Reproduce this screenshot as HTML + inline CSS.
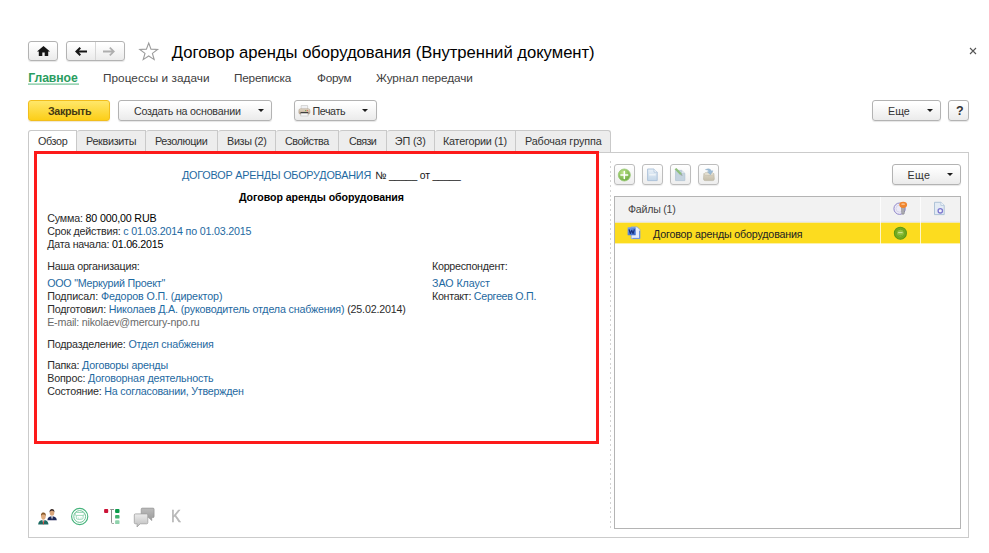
<!DOCTYPE html>
<html lang="ru">
<head>
<meta charset="utf-8">
<title>Договор аренды оборудования (Внутренний документ)</title>
<style>
html,body{margin:0;padding:0;background:#fff;}
body{width:989px;height:553px;position:relative;overflow:hidden;font-family:"Liberation Sans",Arial,sans-serif;font-size:11px;color:#2b2b2b;}
.abs{position:absolute;}
.tx{position:absolute;white-space:nowrap;color:#2b2b2b;}
.lnk{color:#1e69a1;}
.blk{color:#000;}
.btn{position:absolute;box-sizing:border-box;border:1px solid #b3b3b3;border-radius:3px;background:linear-gradient(#ffffff 10%,#ebebeb);box-shadow:0 1px 1px rgba(0,0,0,.10);}
.ibtn{position:absolute;box-sizing:border-box;border:1px solid #bdbdbd;border-radius:3px;background:linear-gradient(#ffffff,#eeeeee);box-shadow:0 1px 1px rgba(0,0,0,.08);width:21px;height:21px;top:164px;}
.arr{position:absolute;width:0;height:0;border-left:3.5px solid transparent;border-right:3.5px solid transparent;border-top:3.5px solid #1c1c1c;}
.tab{position:absolute;top:130px;height:23px;box-sizing:border-box;border:1px solid #c9c9c9;border-bottom:none;border-left:none;background:#ededed;border-radius:3px 0 0 0;}
.tab.first{border-left:1px solid #c9c9c9;background:#fff;border-radius:3px 0 0 0;}
.tab.last{border-radius:0 3px 0 0;}
</style>
</head>
<body>

<!-- header buttons -->
<div class="btn" style="left:28px;top:41px;width:30px;height:20px;">
<svg class="abs" style="left:7.6px;top:3.8px" width="13" height="10" viewBox="0 0 13 10"><path d="M6.5 0 L13 5.4 H11.2 V10 H7.7 V6.6 H5.3 V10 H1.8 V5.4 H0 Z" fill="#161616"/></svg>
</div>
<div class="btn" style="left:66px;top:41px;width:59px;height:20px;">
<div class="abs" style="left:28px;top:0;width:1px;height:18px;background:#d6d6d6"></div>
<svg class="abs" style="left:8px;top:4.5px" width="12" height="9" viewBox="0 0 12 9"><path d="M4.6 0 L0 4.5 L4.6 9 L6 7.6 L4 5.6 H12 V3.4 H4 L6 1.4 Z" fill="#161616"/></svg>
<svg class="abs" style="left:35.5px;top:4.5px" width="12" height="9" viewBox="0 0 12 9"><path d="M7.4 0 L12 4.5 L7.4 9 L6.2 7.8 L8.6 5.4 H0 V3.6 H8.6 L6.2 1.2 Z" fill="#aeaeae"/></svg>
</div>
<svg class="abs" style="left:138px;top:41px" width="22" height="20" viewBox="0 0 22 20"><path d="M10.7 2 L13 8.1 L19.6 8.4 L14.4 12.4 L16.2 18.6 L10.7 15 L5.2 18.6 L7 12.4 L1.8 8.4 L8.4 8.1 Z" fill="#fff" stroke="#9c9c9c" stroke-width="1.1" stroke-linejoin="miter"/></svg>
<svg class="abs" style="left:969px;top:47px" width="8" height="8" viewBox="0 0 8 8"><path d="M1 1 L7 7 M7 1 L1 7" stroke="#555" stroke-width="1.1" fill="none"/></svg>

<!-- nav underline -->
<div class="abs" style="left:28px;top:83px;width:51px;height:2px;background:linear-gradient(#c4e6d3,#8ccdaa);"></div>

<!-- command bar -->
<div class="btn" style="left:28px;top:100px;width:82px;height:21px;border-color:#f2be1c;background:linear-gradient(#ffe76a,#fcce18);box-shadow:0 1px 1px rgba(160,110,0,.18);"></div>
<div class="btn" style="left:118px;top:100px;width:154px;height:21px;"><div class="arr" style="left:139px;top:8.3px;"></div></div>
<div class="btn" style="left:294px;top:100px;width:83px;height:21px;"><div class="arr" style="left:67.3px;top:8.3px;"></div>
<svg class="abs" style="left:3.4px;top:4.4px" width="13" height="12" viewBox="0 0 13 12"><defs><linearGradient id="gp" x1="0" y1="0" x2="0" y2="1"><stop offset="0" stop-color="#e6dccd"/><stop offset="1" stop-color="#b79f86"/></linearGradient></defs><path d="M3.2 0.6 H9.6 V4.4 H3.2 Z" fill="#fbfbfb" stroke="#b9b9b9" stroke-width="0.6"/><path d="M4.2 2 H8.6 M4.2 3.2 H8.6" stroke="#d5dbe4" stroke-width="0.5"/><rect x="0.9" y="3.8" width="11" height="5.4" rx="1.6" fill="url(#gp)" stroke="#a4937f" stroke-width="0.5"/><rect x="2.6" y="7" width="7.6" height="1.7" fill="#2a2a2a"/><path d="M3 8.2 H9.8 L10.2 11 H2.6 Z" fill="#f7f7f7" stroke="#b5b5b5" stroke-width="0.5"/><rect x="8.6" y="5.2" width="1.3" height="0.9" fill="#e0584a"/><rect x="7" y="5.2" width="1.2" height="0.9" fill="#5fb04c"/></svg>
</div>
<div class="btn" style="left:872px;top:100px;width:69px;height:21px;"><div class="arr" style="left:53.6px;top:8.3px;"></div></div>
<div class="btn" style="left:948px;top:100px;width:21px;height:21px;"></div>

<!-- main panel -->
<div class="abs" style="left:28px;top:152px;width:941px;height:386px;box-sizing:border-box;border:1px solid #cbcbcb;background:#fff;"></div>

<!-- tabs -->
<div class="tab first" style="left:28px;width:49px;"></div>
<div class="tab" style="left:77px;width:69px;"></div>
<div class="tab" style="left:146px;width:72px;"></div>
<div class="tab" style="left:218px;width:58px;"></div>
<div class="tab" style="left:276px;width:63px;"></div>
<div class="tab" style="left:339px;width:48px;"></div>
<div class="tab" style="left:387px;width:48px;"></div>
<div class="tab" style="left:435px;width:81px;"></div>
<div class="tab last" style="left:516px;width:95px;height:22px;"></div>

<!-- red highlight -->
<div class="abs" style="left:34px;top:151px;width:565px;height:293px;box-sizing:border-box;border:3px solid #fd1a1a;background:#fff;"></div>

<!-- bottom icons -->
<svg class="abs" style="left:37px;top:507px" width="22" height="20" viewBox="0 0 22 20">
<defs><filter id="bl" x="-10%" y="-10%" width="120%" height="120%"><feGaussianBlur stdDeviation="0.35"/></filter></defs>
<g filter="url(#bl)">
<!-- back person -->
<path d="M10.4 13.2 C10.4 10.4 12.4 9.2 15 9.2 C17.6 9.2 19.8 10.4 19.8 13.2 Z" fill="#1f2a5a"/>
<path d="M14 9.3 L15 12.6 L16.1 9.3 Z" fill="#e9e9ee"/>
<ellipse cx="15" cy="5.8" rx="2.3" ry="3" fill="#d9a67c"/>
<path d="M12.6 5.6 C12.4 2.6 13.8 1.9 15 1.9 C16.4 1.9 17.7 2.7 17.4 5.6 C17 4.2 16.4 3.8 15 3.8 C13.6 3.8 13 4.3 12.6 5.6 Z" fill="#3b2c2a"/>
<!-- front person -->
<path d="M1.2 17.6 C1.2 14.4 3.6 13 6.4 13 C9.2 13 11.4 14.4 11.4 17.6 Z" fill="#1f6b62"/>
<path d="M5.3 13.1 L6.4 17.2 L7.5 13.1 Z" fill="#f1f1f1"/>
<path d="M6.1 13.6 L6.7 13.6 L6.9 17 L6.4 17.5 L5.9 17 Z" fill="#d8342c"/>
<ellipse cx="6.4" cy="9.6" rx="2.3" ry="3.1" fill="#e0ad80"/>
<path d="M4 9.4 C3.8 6.2 5.2 5.6 6.4 5.6 C7.8 5.6 9.1 6.3 8.8 9.4 C8.4 7.9 7.8 7.5 6.4 7.5 C5 7.5 4.4 8 4 9.4 Z" fill="#8a5a2c"/>
</g>
</svg>
<svg class="abs" style="left:70px;top:507px" width="20" height="20" viewBox="0 0 20 20">
<circle cx="9.7" cy="9.5" r="8.1" fill="#fff" stroke="#46b47c" stroke-width="1.1"/>
<circle cx="9.7" cy="9.5" r="5.9" fill="#fff" stroke="#5cbc8a" stroke-width="0.9"/>
<rect x="5" y="5.5" width="9.4" height="2.9" rx="1.3" fill="none" stroke="#86cfaa" stroke-width="0.8"/>
<path d="M6.3 8.5 V10.8 Q6.3 12.3 7.8 12.3 H11.6 Q13.1 12.3 13.1 10.8 V8.5" fill="none" stroke="#86cfaa" stroke-width="0.8"/>
<path d="M8.3 10.2 V12 M11.1 10.2 V12" stroke="#b4e2cb" stroke-width="0.7"/>
</svg>
<svg class="abs" style="left:103px;top:508px" width="18" height="18" viewBox="0 0 18 18">
<rect x="1.1" y="1.1" width="4.1" height="3.9" rx="0.9" fill="#cc1236"/>
<path d="M7.2 1.5 H11 M8.5 1.5 V14.4 Q8.5 15.5 9.6 15.5 H10.8" fill="none" stroke="#8e8e8e" stroke-width="1"/>
<rect x="12.1" y="1.1" width="4.4" height="3.9" rx="0.9" fill="#0a9a4a"/>
<rect x="12.1" y="7" width="4.4" height="3.6" rx="0.9" fill="#3fb06e"/>
<rect x="12.1" y="12.2" width="4.4" height="3.9" rx="0.9" fill="#8fd2ac"/>
</svg>
<svg class="abs" style="left:133.3px;top:506.5px" width="23" height="22" viewBox="0 0 23 22">
<defs>
<linearGradient id="gb1" x1="0" y1="0" x2="0" y2="1"><stop offset="0" stop-color="#bcbcbc"/><stop offset="1" stop-color="#9a9a9a"/></linearGradient>
<linearGradient id="gb2" x1="0" y1="0" x2="0" y2="1"><stop offset="0" stop-color="#ececec"/><stop offset="1" stop-color="#bcbcbc"/></linearGradient>
</defs>
<path d="M9.3 1.1 H20 Q21.1 1.1 21.1 2.2 V9.4 Q21.1 10.6 20 10.6 H18.6 L18.8 13.6 L15.6 10.6 H9.3 Q8.2 10.6 8.2 9.4 V2.2 Q8.2 1.1 9.3 1.1 Z" fill="url(#gb1)" stroke="#8c8c8c" stroke-width="0.6"/>
<path d="M2.4 6.9 H13.6 Q14.8 6.9 14.8 8 V15.6 Q14.8 16.8 13.6 16.8 H7.2 L4 20 L4.2 16.8 H2.4 Q1.3 16.8 1.3 15.6 V8 Q1.3 6.9 2.4 6.9 Z" fill="url(#gb2)" stroke="#9f9f9f" stroke-width="0.8"/>
</svg>


<!-- right section -->
<div class="abs" style="left:610px;top:160.6px;width:1px;height:369px;background:repeating-linear-gradient(to bottom,#d3d3d3 0,#d3d3d3 2px,transparent 2px,transparent 4.8px);"></div>
<div class="ibtn" style="left:614px;"></div>
<div class="ibtn" style="left:642px;"></div>
<div class="ibtn" style="left:670px;"></div>
<div class="ibtn" style="left:698px;"></div>
<!-- right toolbar icons -->
<svg class="abs" style="left:617px;top:168px" width="15" height="15" viewBox="0 0 15 15">
<defs><radialGradient id="gg" cx="0.4" cy="0.3" r="0.8"><stop offset="0" stop-color="#bfe38c"/><stop offset="1" stop-color="#62a436"/></radialGradient></defs>
<circle cx="7.3" cy="7" r="6" fill="url(#gg)" stroke="#9ccb7a" stroke-width="0.9"/>
<path d="M7.3 3.6 V10.4 M3.9 7 H10.7" stroke="#fff" stroke-width="1.5" stroke-linecap="round"/>
</svg>
<svg class="abs" style="left:646px;top:168px" width="13" height="14" viewBox="0 0 13 14">
<defs><linearGradient id="gd" x1="0" y1="0" x2="0" y2="1"><stop offset="0" stop-color="#eaf1f8"/><stop offset="1" stop-color="#c3d6e8"/></linearGradient></defs>
<path d="M1.6 1 H8 L11.2 4.2 V12.6 H1.6 Z" fill="url(#gd)" stroke="#a9c0d8" stroke-width="0.9"/>
<path d="M8 1 V4.2 H11.2" fill="#f6f9fc" stroke="#a9c0d8" stroke-width="0.7"/>
<path d="M3.2 6.8 H9.6" stroke="#f4f8fb" stroke-width="1.2"/>
</svg>
<svg class="abs" style="left:673px;top:167px" width="14" height="15" viewBox="0 0 14 15">
<path d="M2.6 3.4 H8.6 L11.8 6.4 V13.6 H2.6 Z" fill="#c4d3df" stroke="#b1c3d2" stroke-width="0.8"/>
<path d="M8.6 3.4 V6.4 H11.8" fill="#e6edf3" stroke="#b1c3d2" stroke-width="0.6"/>
<path d="M1.6 2.3 L3.4 0.9 L8.8 6.6 L7.2 8 Z" fill="#8dbf7a"/>
<path d="M7.2 8 L8.8 6.6 L9.6 8.9 Z" fill="#9aa7a0"/>
</svg>
<svg class="abs" style="left:702px;top:167px" width="14" height="15" viewBox="0 0 14 15">
<defs><linearGradient id="gt" x1="0" y1="0" x2="0" y2="1"><stop offset="0" stop-color="#ddd6c4"/><stop offset="1" stop-color="#c4bdaa"/></linearGradient></defs>
<path d="M1.9 6.6 Q6.9 9.6 11.9 6.6 L12.3 12 Q12.3 13.6 10.6 13.6 H3.2 Q1.5 13.6 1.5 12 Z" fill="url(#gt)" stroke="#b7b19f" stroke-width="0.6"/><ellipse cx="6.9" cy="6.9" rx="5" ry="1.7" fill="#e4dfd0" stroke="#bdb7a6" stroke-width="0.5"/>
<path d="M3.4 2.6 Q8 0.6 9.4 4 L11 3.8 L8.4 7.8 L5.4 4.8 L7.1 4.5 Q6.2 2.6 3.4 2.6 Z" fill="#9bbbd6" stroke="#86a9c6" stroke-width="0.4"/>
</svg>

<div class="btn" style="left:892px;top:164px;width:69px;height:21px;"><div class="arr" style="left:53.6px;top:8.3px;"></div></div>

<div class="abs" style="left:614px;top:196px;width:347px;height:333px;box-sizing:border-box;border:1px solid #b4b4b4;background:#fff;"></div>
<div class="abs" style="left:615px;top:197px;width:345px;height:24px;background:#f2f2f2;"></div>
<div class="abs" style="left:615px;top:221px;width:345px;height:1px;background:#e9e9f4;"></div>
<div class="abs" style="left:615px;top:222px;width:345px;height:22px;background:linear-gradient(#f2e9b4 0,#f2e9b4 1px,#fcdc1f 1px,#fcdc1f 21px,#fdf1a8 21px);"></div>
<div class="abs" style="left:880px;top:197px;width:1px;height:46.5px;background:rgba(255,255,255,.75);"></div>
<div class="abs" style="left:919.6px;top:197px;width:1px;height:46.5px;background:rgba(255,255,255,.75);"></div>
<!-- file table icons -->
<svg class="abs" style="left:893px;top:201px" width="16" height="15" viewBox="0 0 16 15">
<circle cx="6.6" cy="7.7" r="5.7" fill="#eceaf6" stroke="#8f86c9" stroke-width="1"/>
<circle cx="6.6" cy="7.6" r="3.6" fill="none" stroke="#cfcbe6" stroke-width="0.7"/>
<path d="M8.4 5.8 L11.6 5.8 L11.3 12.4 L10 13.8 L8.7 12.4 Z" fill="#9a9aa0" stroke="#7d7d84" stroke-width="0.4"/>
<path d="M10 7 V12.4" stroke="#c9c9ce" stroke-width="0.7"/>
<ellipse cx="10.2" cy="3.8" rx="3.9" ry="3.1" fill="#f0862e"/>
<rect x="8.4" y="2.6" width="3.4" height="1.1" rx="0.55" fill="#fbd0a4"/>
</svg>
<svg class="abs" style="left:933px;top:201px" width="13" height="15" viewBox="0 0 13 15">
<path d="M1.5 1.3 H7.9 L11.2 4.4 V13.6 H1.5 Z" fill="#e3ebf4" stroke="#a8bdd4" stroke-width="0.9"/>
<path d="M7.9 1.3 V4.4 H11.2" fill="#f5f8fb" stroke="#a8bdd4" stroke-width="0.7"/>
<circle cx="7.3" cy="9.8" r="2.2" fill="#f3f3fb" stroke="#7d78cf" stroke-width="1.3"/>
</svg>
<svg class="abs" style="left:893px;top:226px" width="15" height="15" viewBox="0 0 15 15">
<circle cx="7.4" cy="7.2" r="6" fill="#76ab22" stroke="#5b9a16" stroke-width="1.1"/>
<circle cx="7.4" cy="7.2" r="4" fill="#93c03c" stroke="#64a01c" stroke-width="0.8"/>
<path d="M5.2 6.6 H9.6" stroke="#d5e99a" stroke-width="1"/>
<path d="M4.9 9 Q7.4 10.6 9.9 9" stroke="#5fa626" stroke-width="0.7" fill="none"/>
</svg>
<svg class="abs" style="left:627px;top:226px" width="14" height="14" viewBox="0 0 14 14">
<defs><linearGradient id="gw" x1="0" y1="0" x2="1" y2="1"><stop offset="0" stop-color="#7fa6ea"/><stop offset="1" stop-color="#2f62c8"/></linearGradient></defs>
<path d="M4.2 0.9 H10.2 L12.9 3.6 V12.7 H4.2 Z" fill="#e6edfa" stroke="#86a6e2" stroke-width="0.8"/>
<path d="M5.6 12.4 H12.6 V5" fill="none" stroke="#5f8ade" stroke-width="0.9"/>
<rect x="0.6" y="1.2" width="8.1" height="8.1" rx="0.6" fill="url(#gw)"/>
<path d="M2 3.4 L3.3 7.4 L4.7 4.4 L6.1 7.4 L7.4 3.4" fill="none" stroke="#16307e" stroke-width="1.2" stroke-linejoin="round"/>
</svg>


<div class="tx" id="title" style="left:171.80px;top:42.19px;font-size:16.67px;line-height:22px;letter-spacing:-0.033px;color:#000;">Договор аренды оборудования (Внутренний документ)</div>
<div class="tx" id="n1" style="left:28.20px;top:70.97px;font-size:12.2px;line-height:14px;letter-spacing:-0.050px;color:#2a9d60;font-weight:bold;">Главное</div>
<div class="tx" id="n2" style="left:103.00px;top:70.50px;font-size:11.8px;line-height:14px;letter-spacing:0.031px;color:#404040;">Процессы и задачи</div>
<div class="tx" id="n3" style="left:234.00px;top:70.50px;font-size:11.8px;line-height:14px;letter-spacing:-0.219px;color:#404040;">Переписка</div>
<div class="tx" id="n4" style="left:317.00px;top:70.50px;font-size:11.8px;line-height:14px;letter-spacing:-0.312px;color:#404040;">Форум</div>
<div class="tx" id="n5" style="left:376.00px;top:70.50px;font-size:11.8px;line-height:14px;letter-spacing:-0.089px;color:#404040;">Журнал передачи</div>
<div class="tx" id="b1" style="left:48.00px;top:103.56px;font-size:10.7px;line-height:14px;letter-spacing:-0.333px;color:#453a12;font-weight:bold;">Закрыть</div>
<div class="tx" id="b2" style="left:134.00px;top:104.36px;font-size:10.7px;line-height:14px;letter-spacing:-0.211px;color:#333;">Создать на основании</div>
<div class="tx" id="b3" style="left:312.40px;top:104.36px;font-size:10.7px;line-height:14px;letter-spacing:-0.380px;color:#333;">Печать</div>
<div class="tx" id="b4" style="left:888.00px;top:104.36px;font-size:10.7px;line-height:14px;letter-spacing:0.000px;color:#333;">Еще</div>
<div class="tx" id="b5" style="left:956.00px;top:103.87px;font-size:12.5px;line-height:14px;letter-spacing:0.000px;color:#333;font-weight:bold;">?</div>
<div class="tx" id="b6" style="left:907.60px;top:168.16px;font-size:10.7px;line-height:14px;letter-spacing:0.350px;color:#333;">Еще</div>
<div class="tx" id="tb0" style="left:38.00px;top:134.43px;font-size:10.8px;line-height:14px;letter-spacing:-0.375px;color:#333;">Обзор</div>
<div class="tx" id="tb1" style="left:86.00px;top:134.43px;font-size:10.8px;line-height:14px;letter-spacing:-0.312px;color:#333;">Реквизиты</div>
<div class="tx" id="tb2" style="left:155.00px;top:134.43px;font-size:10.8px;line-height:14px;letter-spacing:-0.375px;color:#333;">Резолюции</div>
<div class="tx" id="tb3" style="left:227.00px;top:134.43px;font-size:10.8px;line-height:14px;letter-spacing:-0.321px;color:#333;">Визы (2)</div>
<div class="tx" id="tb4" style="left:285.00px;top:134.43px;font-size:10.8px;line-height:14px;letter-spacing:-0.464px;color:#333;">Свойства</div>
<div class="tx" id="tb5" style="left:349.00px;top:134.43px;font-size:10.8px;line-height:14px;letter-spacing:-0.625px;color:#333;">Связи</div>
<div class="tx" id="tb6" style="left:394.80px;top:134.43px;font-size:10.8px;line-height:14px;letter-spacing:-0.140px;color:#333;">ЭП (3)</div>
<div class="tx" id="tb7" style="left:443.00px;top:134.43px;font-size:10.8px;line-height:14px;letter-spacing:-0.229px;color:#333;">Категории (1)</div>
<div class="tx" id="tb8" style="left:525.00px;top:134.43px;font-size:10.8px;line-height:14px;letter-spacing:-0.115px;color:#333;">Рабочая группа</div>
<div class="tx" id="d0" style="left:182.00px;top:168.43px;font-size:10.8px;line-height:14px;letter-spacing:-0.194px;"><span class="lnk">ДОГОВОР АРЕНДЫ ОБОРУДОВАНИЯ</span></div>
<div class="tx" id="d0b" style="left:375.20px;top:168.56px;font-size:10.4px;line-height:14px;letter-spacing:-0.157px;color:#111;">№ _____ от _____</div>
<div class="tx" id="d1" style="left:239.00px;top:190.30px;font-size:10.6px;line-height:14px;letter-spacing:-0.058px;color:#000;font-weight:bold;">Договор аренды оборудования</div>
<div class="tx" id="d2" style="left:47.20px;top:211.46px;font-size:10.7px;line-height:14px;letter-spacing:-0.168px;">Сумма: <span class="blk">80 000,00 RUB</span></div>
<div class="tx" id="d3" style="left:47.20px;top:223.66px;font-size:10.7px;line-height:14px;letter-spacing:-0.192px;">Срок действия: <span class="lnk">с 01.03.2014 по 01.03.2015</span></div>
<div class="tx" id="d4" style="left:47.20px;top:236.66px;font-size:10.7px;line-height:14px;letter-spacing:-0.236px;">Дата начала: <span class="blk">01.06.2015</span></div>
<div class="tx" id="d5" style="left:47.20px;top:258.96px;font-size:10.7px;line-height:14px;letter-spacing:-0.231px;">Наша организация:</div>
<div class="tx" id="d6" style="left:47.20px;top:275.86px;font-size:10.7px;line-height:14px;letter-spacing:-0.222px;"><span class="lnk">ООО "Меркурий Проект"</span></div>
<div class="tx" id="d7" style="left:47.20px;top:288.76px;font-size:10.7px;line-height:14px;letter-spacing:-0.116px;">Подписал: <span class="lnk">Федоров О.П. (директор)</span></div>
<div class="tx" id="d8" style="left:47.20px;top:301.56px;font-size:10.7px;line-height:14px;letter-spacing:-0.166px;">Подготовил: <span class="lnk">Николаев Д.А. (руководитель отдела снабжения)</span> (25.02.2014)</div>
<div class="tx" id="d9" style="left:47.20px;top:315.46px;font-size:10.7px;line-height:14px;letter-spacing:-0.207px;color:#6a6a6a;">E-mail: nikolaev@mercury-npo.ru</div>
<div class="tx" id="d10" style="left:47.20px;top:337.06px;font-size:10.7px;line-height:14px;letter-spacing:-0.171px;">Подразделение: <span class="lnk">Отдел снабжения</span></div>
<div class="tx" id="d11" style="left:47.20px;top:357.66px;font-size:10.7px;line-height:14px;letter-spacing:-0.188px;">Папка: <span class="lnk">Договоры аренды</span></div>
<div class="tx" id="d12" style="left:47.20px;top:371.46px;font-size:10.7px;line-height:14px;letter-spacing:-0.148px;">Вопрос: <span class="lnk">Договорная деятельность</span></div>
<div class="tx" id="d13" style="left:47.20px;top:384.26px;font-size:10.7px;line-height:14px;letter-spacing:-0.207px;">Состояние: <span class="lnk">На согласовании, Утвержден</span></div>
<div class="tx" id="d14" style="left:432.00px;top:258.96px;font-size:10.7px;line-height:14px;letter-spacing:-0.250px;">Корреспондент:</div>
<div class="tx" id="d15" style="left:432.00px;top:275.86px;font-size:10.7px;line-height:14px;letter-spacing:-0.056px;"><span class="lnk">ЗАО Клауст</span></div>
<div class="tx" id="d16" style="left:432.00px;top:288.76px;font-size:10.7px;line-height:14px;letter-spacing:-0.288px;">Контакт: <span class="lnk">Сергеев О.П.</span></div>
<div class="tx" id="f0" style="left:628.00px;top:201.50px;font-size:10.6px;line-height:14px;letter-spacing:-0.219px;color:#444;">Файлы (1)</div>
<div class="tx" id="f1" style="left:653.00px;top:226.96px;font-size:10.7px;line-height:14px;letter-spacing:-0.173px;color:#222;">Договор аренды оборудования</div>
<div class="tx" id="k" style="left:170.60px;top:508.18px;font-size:15.8px;line-height:18px;letter-spacing:0.000px;color:#b7b7b7;-webkit-text-stroke:0.45px #b7b7b7;transform:scaleX(0.93);transform-origin:0 0;">K</div>

</body>
</html>
